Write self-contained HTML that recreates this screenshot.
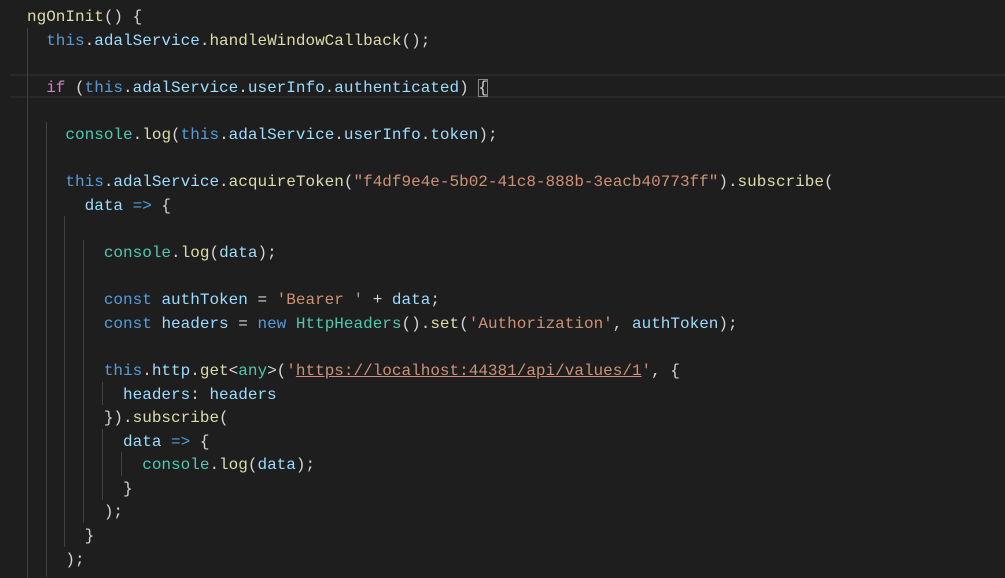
<!DOCTYPE html>
<html><head><meta charset="utf-8"><style>
html,body{margin:0;padding:0;background:#1e1e1e;width:1005px;height:577px;overflow:hidden}
#c{position:absolute;left:27px;top:6px;font-family:"Liberation Mono",monospace;font-size:16px;line-height:23.6px;color:#d4d4d4;white-space:pre}
.l{height:23.6px}
.k{color:#569cd6}.p{color:#9cdcfe}.f{color:#dcdcaa}.t{color:#4ec9b0}.s{color:#ce9178}.c{color:#c586c0}
.u{text-decoration:underline}
.g{position:absolute;width:1px;background:#404040}
.hl{position:absolute;left:10px;right:0;top:74px;height:23.6px;border-top:2px solid #282828;border-bottom:2px solid #282828;box-sizing:border-box}
.bm{outline:1px solid #888;outline-offset:-1px}
</style></head><body>
<div class="hl"></div>
<div class="g" style="left:27px;top:27.6px;height:550px"></div>
<div class="g" style="left:46px;top:122px;height:455px"></div>
<div class="g" style="left:64px;top:216.4px;height:330.4px"></div>
<div class="g" style="left:83px;top:240px;height:283.2px"></div>
<div class="g" style="left:102px;top:381.6px;height:23.6px"></div>
<div class="g" style="left:102px;top:428.8px;height:70.8px"></div>
<div class="g" style="left:121px;top:452.4px;height:23.6px"></div>
<div id="c"><div class="l"><span class="f">ngOnInit</span>() {</div><div class="l">  <span class="k">this</span>.<span class="p">adalService</span>.<span class="f">handleWindowCallback</span>();</div><div class="l"> </div><div class="l">  <span class="c">if</span> (<span class="k">this</span>.<span class="p">adalService</span>.<span class="p">userInfo</span>.<span class="p">authenticated</span>) <span class="bm">{</span></div><div class="l"> </div><div class="l">    <span class="t">console</span>.<span class="f">log</span>(<span class="k">this</span>.<span class="p">adalService</span>.<span class="p">userInfo</span>.<span class="p">token</span>);</div><div class="l"> </div><div class="l">    <span class="k">this</span>.<span class="p">adalService</span>.<span class="f">acquireToken</span>(<span class="s">"f4df9e4e-5b02-41c8-888b-3eacb40773ff"</span>).<span class="f">subscribe</span>(</div><div class="l">      <span class="p">data</span> <span class="k">=&gt;</span> {</div><div class="l"> </div><div class="l">        <span class="t">console</span>.<span class="f">log</span>(<span class="p">data</span>);</div><div class="l"> </div><div class="l">        <span class="k">const</span> <span class="p">authToken</span> = <span class="s">'Bearer '</span> + <span class="p">data</span>;</div><div class="l">        <span class="k">const</span> <span class="p">headers</span> = <span class="k">new</span> <span class="t">HttpHeaders</span>().<span class="f">set</span>(<span class="s">'Authorization'</span>, <span class="p">authToken</span>);</div><div class="l"> </div><div class="l">        <span class="k">this</span>.<span class="p">http</span>.<span class="f">get</span>&lt;<span class="t">any</span>&gt;(<span class="s">'<span class="u">https://localhost:44381/api/values/1</span>'</span>, {</div><div class="l">          <span class="p">headers</span>: <span class="p">headers</span></div><div class="l">        }).<span class="f">subscribe</span>(</div><div class="l">          <span class="p">data</span> <span class="k">=&gt;</span> {</div><div class="l">            <span class="t">console</span>.<span class="f">log</span>(<span class="p">data</span>);</div><div class="l">          }</div><div class="l">        );</div><div class="l">      }</div><div class="l">    );</div></div>
</body></html>
